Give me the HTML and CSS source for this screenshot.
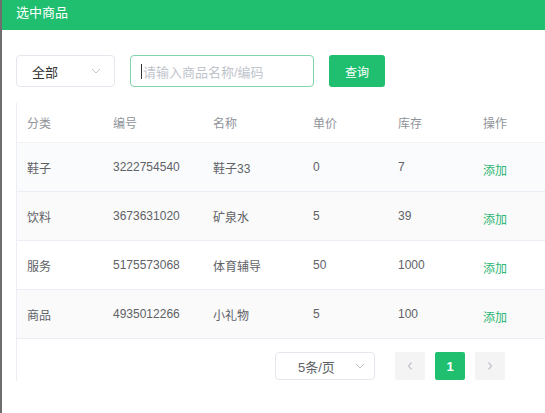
FILE: index.html
```html
<!DOCTYPE html>
<html lang="zh">
<head>
  <meta charset="UTF-8">
  <title>选中商品</title>
  <link rel="stylesheet" href="styles.css">
</head>
<body>
  <!-- Header -->
  <header class="dialog-header">选中商品</header>

  <!-- Search bar -->
  <div class="toolbar">
    <div class="select select-type">
      <span>全部</span>
      <svg class="arrow" width="12" height="12" viewBox="0 0 12 12"><polyline points="2,4 6,8 10,4" fill="none" stroke="#c0c4cc" stroke-width="1"/></svg>
    </div>
    <div class="search-input"><span class="caret"></span>请输入商品名称/编码</div>
    <button class="btn-query">查询</button>
  </div>

  <!-- Goods table -->
  <div class="table-wrap">
    <div class="row head">
      <div class="c1">分类</div><div class="c2">编号</div><div class="c3">名称</div><div class="c4">单价</div><div class="c5">库存</div><div class="c6">操作</div>
    </div>
    <div class="row hover">
      <div class="c1">鞋子</div><div class="c2">3222754540</div><div class="c3">鞋子33</div><div class="c4">0</div><div class="c5">7</div><div class="c6"><a class="add">添加</a></div>
    </div>
    <div class="row stripe">
      <div class="c1">饮料</div><div class="c2">3673631020</div><div class="c3">矿泉水</div><div class="c4">5</div><div class="c5">39</div><div class="c6"><a class="add">添加</a></div>
    </div>
    <div class="row">
      <div class="c1">服务</div><div class="c2">5175573068</div><div class="c3">体育辅导</div><div class="c4">50</div><div class="c5">1000</div><div class="c6"><a class="add">添加</a></div>
    </div>
    <div class="row stripe">
      <div class="c1">商品</div><div class="c2">4935012266</div><div class="c3">小礼物</div><div class="c4">5</div><div class="c5">100</div><div class="c6"><a class="add">添加</a></div>
    </div>

    <!-- Pagination -->
    <div class="pager">
      <div class="select page-size">
        <span>5条/页</span>
        <svg class="arrow" width="12" height="12" viewBox="0 0 12 12"><polyline points="2,4 6,8 10,4" fill="none" stroke="#c0c4cc" stroke-width="1"/></svg>
      </div>
      <div class="page-btn"><svg width="8" height="10" viewBox="0 0 8 10"><polyline points="5.5,1.5 2.5,5 5.5,8.5" fill="none" stroke="#c0c4cc" stroke-width="1.2"/></svg></div>
      <div class="page-btn active">1</div>
      <div class="page-btn"><svg width="8" height="10" viewBox="0 0 8 10"><polyline points="2.5,1.5 5.5,5 2.5,8.5" fill="none" stroke="#c0c4cc" stroke-width="1.2"/></svg></div>
    </div>
  </div>
</body>
</html>
```

FILE: styles.css
```css
/* General */
body {
  margin: 0;
  height: 413px;
  overflow: hidden;
  border-left: 2px solid #6e6e6e;
  font-family: "Liberation Sans", "Noto Sans CJK SC", sans-serif;
  color: #606266;
  background: #fff;
}

/* Header */
.dialog-header {
  height: 30px;
  line-height: 26px;
  padding-left: 14px;
  background-color: #20bf6f;
  color: #fff;
  font-size: 13px;
}

/* Toolbar */
.toolbar {
  display: flex;
  gap: 15px;
  padding: 25px 0 0 14px;
}

.select {
  box-sizing: border-box;
  height: 32px;
  border: 1px solid #e4e7ed;
  border-radius: 4px;
  display: flex;
  align-items: center;
  justify-content: space-between;
  font-size: 13px;
  color: #333;
}

.select-type {
  width: 99px;
  padding: 0 12px 0 15px;
}

.search-input {
  box-sizing: border-box;
  width: 184px;
  height: 32px;
  border: 1px solid #80d4aa;
  border-radius: 4px;
  display: flex;
  align-items: center;
  padding-left: 10px;
  font-size: 13px;
  color: #c0c4cc;
}

.caret {
  width: 1px;
  height: 15px;
  background: #333;
  margin-right: 1px;
}

.btn-query {
  width: 56px;
  height: 32px;
  border: none;
  border-radius: 3px;
  background-color: #20bf6f;
  color: #fff;
  font-family: inherit;
  font-size: 12px;
}

/* Table */
.table-wrap {
  margin: 16px 0 0 14px;
  border-left: 1px solid #ebeef5;
  padding-bottom: 1px;
}

.row {
  display: flex;
  height: 49px;
  align-items: center;
  border-bottom: 1px solid #ebeef5;
  box-sizing: border-box;
  font-size: 12px;
  white-space: nowrap;
}

.row.head {
  height: 40px;
  color: #909399;
  border-bottom-color: #f2f3f6;
}

.row.hover {
  background-color: #fafbfc;
}

.row.stripe {
  background-color: #fafafa;
}

.row > div {
  flex: none;
  padding-left: 10px;
  box-sizing: border-box;
}

.c1 { width: 86px; }
.c2 { width: 100px; }
.c3 { width: 100px; }
.c4 { width: 85px; }
.c5 { width: 85px; }
.c6 { width: 100px; }

.add {
  display: inline-block;
  padding-top: 5px;
  color: #2cb673;
  cursor: pointer;
}

/* Pagination */
.pager {
  display: flex;
  align-items: center;
  padding: 13px 0 0 258px;
  gap: 10px;
}

.page-size {
  flex: none;
  width: 100px;
  height: 28px;
  padding: 0 8px 0 22px;
  margin-right: 10px;
  color: #606266;
}

.page-btn {
  flex: none;
  width: 30px;
  height: 28px;
  border-radius: 2px;
  background-color: #f4f4f5;
  display: flex;
  align-items: center;
  justify-content: center;
  font-size: 13px;
  font-weight: bold;
}

.page-btn.active {
  background-color: #20bf6f;
  color: #fff;
}
```
